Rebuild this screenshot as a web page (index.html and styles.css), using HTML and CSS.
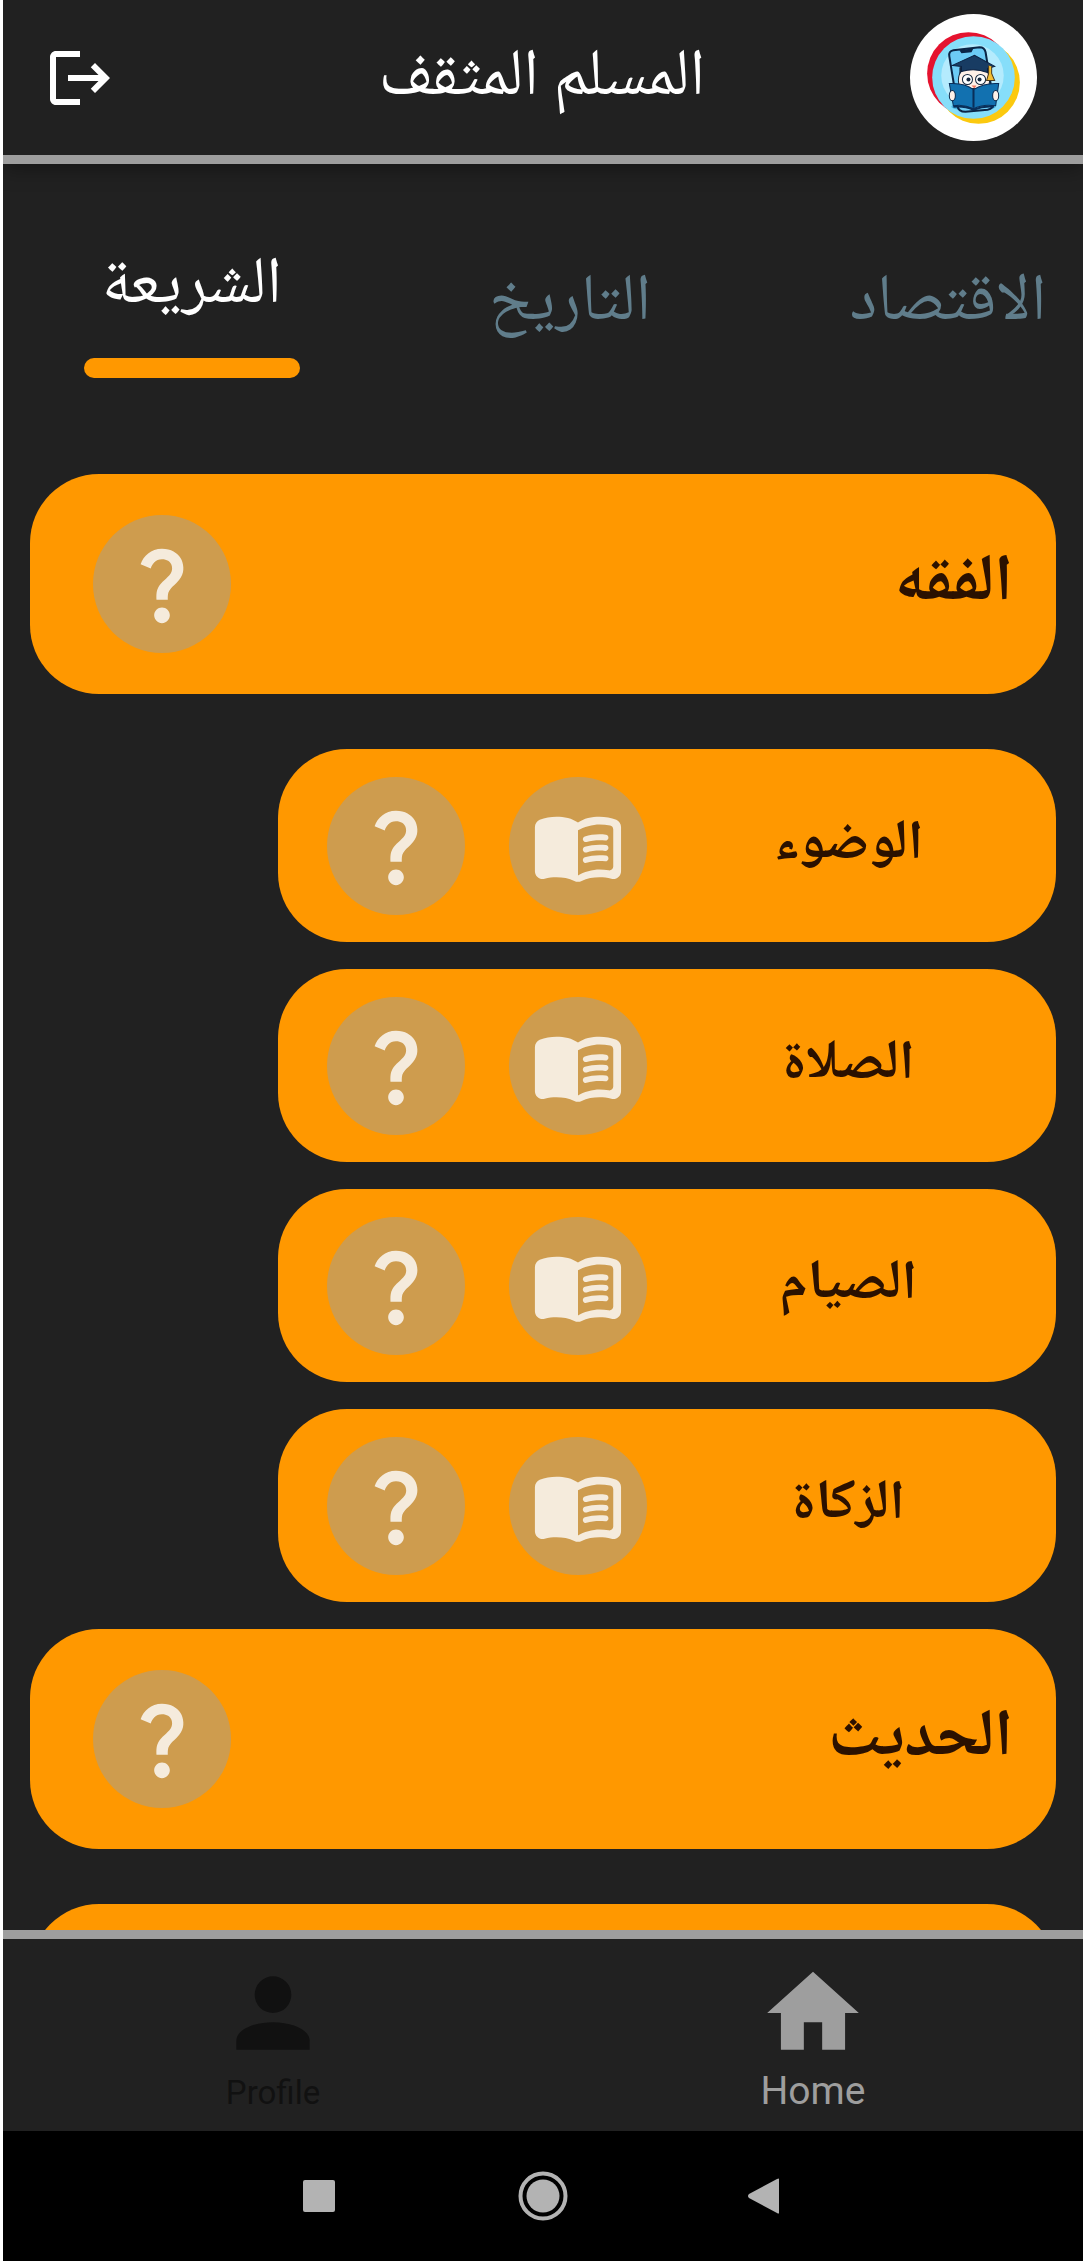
FILE: index.html
```html
<!DOCTYPE html>
<html lang="ar" dir="rtl">
<head>
<meta charset="utf-8">
<meta name="viewport" content="width=device-width, initial-scale=1">
<title>المسلم المثقف</title>
<link rel="stylesheet" href="styles.css">
</head>
<body>
<svg class="sprite" aria-hidden="true">
  <symbol id="question" viewBox="0 0 24 24"><path d="M11.07,12.85c0.77-1.39,2.25-2.21,3.11-3.44c0.91-1.29,0.4-3.7-2.18-3.7c-1.69,0-2.52,1.28-2.87,2.34L6.54,6.96C7.25,4.83,9.18,3,11.99,3c2.35,0,3.96,1.07,4.78,2.41c0.7,1.15,1.11,3.3,0.03,4.9c-1.2,1.77-2.35,2.31-2.97,3.45c-0.25,0.46-0.35,0.76-0.35,2.24h-2.89C10.58,15.22,10.46,13.95,11.07,12.85z M14,20c0,1.1-0.9,2-2,2s-2-0.9-2-2c0-1.1,0.9-2,2-2S14,18.9,14,20z"/></symbol>
  <symbol id="book" viewBox="0 0 24 24"><path d="M17.5 4.5c-1.95 0-4.05.4-5.5 1.5-1.45-1.1-3.55-1.5-5.5-1.5-1.45 0-2.99.22-4.28.79C1.49 5.62 1 6.33 1 7.14v11.28c0 1.3 1.22 2.26 2.48 1.94.98-.25 2.02-.36 3.02-.36 1.56 0 3.22.26 4.56.92.6.3 1.28.3 1.87 0 1.34-.67 3-.92 4.56-.92 1 0 2.04.11 3.02.36 1.26.33 2.48-.63 2.48-1.94V7.14c0-.81-.49-1.52-1.22-1.85-1.28-.57-2.82-.79-4.27-.79zM21 17.23c0 .63-.58 1.09-1.2.98-.75-.14-1.53-.2-2.3-.2-1.7 0-4.15.65-5.5 1.5V8c1.35-.85 3.8-1.5 5.5-1.5.92 0 1.83.09 2.7.28.46.1.8.51.8.98v9.47z"/><g id="line"><path d="M13.98 11.01c-.32 0-.61-.2-.71-.52-.13-.39.09-.82.48-.94 1.54-.5 3.53-.66 5.36-.45.41.05.71.42.66.83-.05.41-.42.71-.83.66-1.62-.19-3.39-.04-4.73.39-.08.01-.16.03-.23.03z"/></g><use href="#line" y="2.66"/><use href="#line" y="5.32"/></symbol>
</svg>
<div class="app">
  <header class="topbar">
    <svg class="avatar" viewBox="0 0 126 126" role="img">
      <circle cx="63" cy="63" r="63" fill="#fff"/>
      <circle cx="58" cy="59" r="41" fill="#e5132f"/>
      <circle cx="68" cy="68" r="41" fill="#fbc90f"/>
      <circle cx="63" cy="63" r="41" fill="#86defa"/>
      <circle cx="62" cy="61" r="31" fill="#b4ebfd"/>
      <ellipse cx="63" cy="92" rx="22" ry="4" fill="#47b5e4"/>
      <path d="M39 42q-1-5 4-6l26-3q5 0 6 5l8 50q0 6-6 7l-22 2q-7 0-8-6z" fill="#6ccbf5" stroke="#0b2546" stroke-width="2"/>
      <path d="M49 36l14-2-2 4-10 1z" fill="#0b2546"/>
      <path d="M48 66q0-14 16-14 15 0 15 14l-1 8H49z" fill="#fff1e8" stroke="#17283e" stroke-width="1"/>
      <path d="M49 60q2-3 4-4 11-3 23 1l3 3v-7l-15-6-15 6z" fill="#17283e"/>
      <path d="M42 51l22-10 20 11-7 2v4q-13-5-26-1v-5z" fill="#183c63" stroke="#0b2040" stroke-width="1"/>
      <path d="M78 51v8l-2 7h8l-3-7v-7" fill="#f4bd32" stroke="#4a3a20" stroke-width="1"/>
      <g fill="#fff" stroke="#17283e" stroke-width="1"><circle cx="57" cy="65" r="5"/><circle cx="70" cy="65" r="5"/></g>
      <circle cx="58" cy="65" r="2" fill="#17283e"/><circle cx="69" cy="65" r="2" fill="#17283e"/>
      <path d="M61 71h5l-2 3z" fill="#ef755d"/>
      <path d="M39 69q15-1 24 6 11-7 25-6l-3 22q-13-2-22 3-10-5-20-3z" fill="#1271b0" stroke="#092e59" stroke-width="1"/>
      <path d="M63 75v18M43 92q11-1 20 3 10-4 20-3" fill="none" stroke="#092e59" stroke-width="2"/>
      <g fill="#fff1e8" stroke="#0b2546" stroke-width="1"><ellipse cx="42" cy="81" rx="3" ry="5"/><ellipse cx="85" cy="81" rx="3" ry="5"/></g>
    </svg>
    <h1 class="title">المسلم المثقف</h1>
    <button class="logout" type="button" aria-label="تسجيل الخروج"><svg viewBox="0 0 24 24"><path d="M17 7l-1.41 1.41L18.17 11H8v2h10.17l-2.58 2.58L17 17l5-5zM4 5h8V3H4c-1.1 0-2 .9-2 2v14c0 1.1.9 2 2 2h8v-2H4V5z"/></svg></button>
  </header>

  <nav class="tabs" dir="ltr">
    <a class="tab tab-active" href="#sharia">الشريعة</a>
    <a class="tab" href="#history">التاريخ</a>
    <a class="tab" href="#economy">الاقتصاد</a>
  </nav>

  <main class="list" id="sharia">
    <section class="card">
      <h2 class="card-title">الفقه</h2>
      <button class="round" type="button" aria-label="أسئلة"><svg><use href="#question"/></svg></button>
    </section>
    <section class="card card-sub">
      <h3 class="sub-title">الوضوء</h3>
      <button class="round" type="button" aria-label="قراءة"><svg><use href="#book"/></svg></button>
      <button class="round" type="button" aria-label="أسئلة"><svg><use href="#question"/></svg></button>
    </section>
    <section class="card card-sub">
      <h3 class="sub-title">الصلاة</h3>
      <button class="round" type="button" aria-label="قراءة"><svg><use href="#book"/></svg></button>
      <button class="round" type="button" aria-label="أسئلة"><svg><use href="#question"/></svg></button>
    </section>
    <section class="card card-sub">
      <h3 class="sub-title">الصيام</h3>
      <button class="round" type="button" aria-label="قراءة"><svg><use href="#book"/></svg></button>
      <button class="round" type="button" aria-label="أسئلة"><svg><use href="#question"/></svg></button>
    </section>
    <section class="card card-sub">
      <h3 class="sub-title">الزكاة</h3>
      <button class="round" type="button" aria-label="قراءة"><svg><use href="#book"/></svg></button>
      <button class="round" type="button" aria-label="أسئلة"><svg><use href="#question"/></svg></button>
    </section>
    <section class="card">
      <h2 class="card-title">الحديث</h2>
      <button class="round" type="button" aria-label="أسئلة"><svg><use href="#question"/></svg></button>
    </section>
    <section class="card"></section>
  </main>

  <nav class="bottom">
    <a class="dest dest-active" href="#home"><svg viewBox="0 0 24 24"><path d="M10 20v-6h4v6h5v-8h3L12 3 2 12h3v8z"/></svg><span>Home</span></a>
    <a class="dest" href="#profile"><svg viewBox="0 0 24 24"><path d="M12 4a4 4 0 0 1 4 4 4 4 0 0 1-4 4 4 4 0 0 1-4-4 4 4 0 0 1 4-4m0 10c4.42 0 8 1.79 8 4v2H4v-2c0-2.21 3.58-4 8-4z"/></svg><span>Profile</span></a>
  </nav>

  <footer class="system" dir="ltr">
    <button class="key" type="button" aria-label="Recents"><svg viewBox="0 0 50 50"><rect x="9" y="9" width="32" height="32" rx="2"/></svg></button>
    <button class="key" type="button" aria-label="Home"><svg viewBox="0 0 50 50"><circle cx="25" cy="25" r="16.500"/><circle cx="25" cy="25" r="22.500" fill="none" stroke="#b3b3b3" stroke-width="4"/></svg></button>
    <button class="key" type="button" aria-label="Back"><svg viewBox="0 0 50 50"><path d="M37 8v34q0 1-2 0L7 27q-2-2 0-4L35 8q2-1 2 0z"/></svg></button>
  </footer>
</div>
</body>
</html>
```
FILE: styles.css
```css
* { box-sizing: border-box; }
body {
  margin: 0;
  background: #fff;
  font-family: "Noto Naskh Arabic", Roboto, "DejaVu Sans", sans-serif;
}
h1, h2, h3 { margin: 0; }
button { border: 0; padding: 0; background: none; display: flex; align-items: center; justify-content: center; }
a { text-decoration: none; }
.sprite { display: none; }

.app {
  display: flex;
  flex-direction: column;
  height: 100vh;
  margin-left: 3px;
  background: #212121;
  overflow: hidden;
}

.topbar {
  flex: none;
  display: flex;
  align-items: center;
  justify-content: space-between;
  height: 164px;
  padding: 0 46px 0 44px;
  border-bottom: 9px solid #9e9e9e;
  box-shadow: 0 4px 20px #00000060;
}
.avatar { width: 127px; height: 127px; }
.title { padding-top: 4px; color: #fff; font-size: 66px; font-weight: 400; line-height: 80px; }
.logout { width: 130px; height: 72px; justify-content: flex-end; margin-left: -3px; }
.logout svg { width: 72px; height: 72px; fill: #fff; }

.tabs {
  flex: none;
  display: grid;
  grid-template-columns: repeat(3, 35%);
  height: 310px;
  padding-top: 84px;
  overflow: hidden;
}
.tab {
  display: flex;
  flex-direction: column;
  align-items: center;
  padding-top: 17px;
  color: #607d8b;
  font-size: 66px;
  line-height: 80px;
}
.tab-active { padding-top: 0; color: #fff; }
.tab-active::after {
  content: "";
  width: 216px;
  height: 20px;
  margin-top: 30px;
  border-radius: 10px;
  background: #ff9800;
}

.list {
  flex: 1;
  min-height: 0;
  padding: 0 27px;
  overflow: hidden;
}
.card {
  display: flex;
  align-items: center;
  justify-content: space-between;
  height: 220px;
  margin-bottom: 55px;
  padding: 0 43px 0 63px;
  border-radius: 69px;
  background: #ff9800;
  color: #2b1100;
}
.card-title { padding-top: 4px; font-size: 66px; line-height: 80px; }
.card-sub {
  height: 193px;
  margin-left: 248px;
  margin-bottom: 27px;
  padding: 0 6px 0 49px;
  gap: 44px;
}
.sub-title { flex: 1; margin-left: -44px; font-size: 55px; line-height: 64px; text-align: center; }
.round {
  flex: none;
  width: 138px;
  height: 138px;
  border-radius: 50%;
  background: #ce9c4e;
}
.round svg { width: 94px; height: 94px; fill: #f5ebdc; }

.bottom {
  flex: none;
  display: flex;
  height: 201px;
  border-top: 9px solid #9e9e9e;
  font-family: Roboto, sans-serif;
}
.dest {
  flex: 1;
  display: flex;
  flex-direction: column;
  align-items: center;
  padding-top: 19px;
  color: #111;
  font-size: 33px;
  line-height: 50px;
}
.dest svg { width: 110px; height: 110px; fill: currentColor; }
.dest-active { color: #9e9e9e; font-size: 39px; line-height: 46px; }

.system {
  flex: none;
  display: flex;
  align-items: center;
  justify-content: center;
  gap: 174px;
  height: 130px;
  background: #000;
}
.key svg { width: 50px; height: 50px; fill: #b3b3b3; }
```
